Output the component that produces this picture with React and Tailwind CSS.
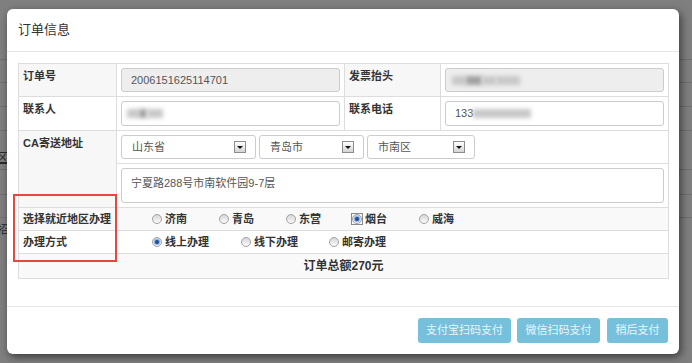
import React from 'react';

const FONT = { fontFamily: '"Liberation Sans", "Noto Sans CJK SC", Arial, sans-serif' };

// old-style radio button
const Radio = ({ checked, focus }) => (
  <span
    className={`inline-flex items-center justify-center w-[12px] h-[12px] ${focus ? 'border border-[#8a8a8a]' : ''}`}
  >
    <span className="w-[10px] h-[10px] rounded-full border border-[#a3a3a3] bg-gradient-to-b from-[#d6d6d6] to-[#fbfbfb] flex items-center justify-center">
      {checked && <span className="w-[4px] h-[4px] rounded-full bg-[#1d4f9c] shadow-[0_0_1px_1px_#7aa6dc]"></span>}
    </span>
  </span>
);

const RadioItem = ({ label, checked, focus, width }) => (
  <span className={`inline-flex items-center gap-[2px] ${width}`}>
    <Radio checked={checked} focus={focus} />
    <span className="font-bold text-[#333]">{label}</span>
  </span>
);

const Select = ({ value, width }) => (
  <div className={`${width} h-[24px] border border-[#ccc] rounded-[3px] bg-white flex items-center justify-between pl-[10px] pr-[9px]`}>
    <span className="text-[#555]">{value}</span>
    <span className="w-[12px] h-[12px] border border-[#8c8c8c] bg-gradient-to-b from-white to-[#d4d4d4] flex items-center justify-center">
      <span className="w-0 h-0 border-l-[3px] border-r-[3px] border-t-[3px] border-l-transparent border-r-transparent border-t-[#111]"></span>
    </span>
  </div>
);

// blurred (masked) personal data
const Blur = ({ w, dark }) => (
  <span className={`inline-block h-[9px] ${w} blur-[2px] ${dark ? 'bg-[#a0a0a0]' : 'bg-[#c8c8c8]'}`}></span>
);

const labelCell = 'p-[4px] align-top font-bold text-[#333] border border-[#ddd]';
const valueCell = 'p-[4px] align-top border border-[#ddd]';

export default function App() {
  return (
    <div className="relative w-[692px] h-[363px] overflow-hidden bg-[#7f7f7f] text-[11px]" style={FONT}>
      {/* page behind the overlay */}
      <div className="flex flex-col">
        <div className="h-[60px] border-b border-[#6f6f6f]"></div>
        <div className="h-[23px] border-b border-[#6f6f6f]"></div>
        <div className="h-[24px] border-b border-[#6f6f6f]"></div>
        <div className="h-[24px] border-b border-[#6f6f6f]"></div>
        <div className="h-[39px] border-b border-[#6f6f6f] pt-[18px]">
          <span className="-ml-[4px] text-[12px] text-[#2a2a2a] underline">区</span>
        </div>
        <div className="h-[25px] border-b border-[#6f6f6f]"></div>
        <div className="h-[23px] border-b border-[#6f6f6f]"></div>
        <div className="h-[30px] pt-[3px]">
          <span className="-ml-[3px] text-[12px] text-[#2a2a2a]">招</span>
        </div>
      </div>

      {/* modal */}
      <div className="absolute left-[7px] top-[9px] w-[672px] h-[345px] bg-white rounded-[6px] shadow-[2px_3px_8px_rgba(0,0,0,0.55)] flex flex-col">
        <div className="h-[43px] px-[11px] flex items-center border-b border-[#e5e5e5]">
          <span className="text-[13px] text-[#333]">订单信息</span>
        </div>

        <div className="pt-[11px] px-[11px] pb-[27px]">
          <table className="w-[650px] table-fixed border-collapse border border-[#ddd] text-[#333]">
            <colgroup>
              <col className="w-[98px]" />
              <col className="w-[228px]" />
              <col className="w-[96px]" />
              <col className="w-[228px]" />
            </colgroup>
            <tbody>
              <tr>
                <td className={`${labelCell} bg-[#f7f7f7]`}>订单号</td>
                <td className={valueCell}>
                  <div className="h-[24px] border border-[#ccc] rounded-[3px] bg-[#eee] flex items-center px-[9px] text-[#555]">
                    2006151625114701
                  </div>
                </td>
                <td className={`${labelCell} bg-[#f7f7f7]`}>发票抬头</td>
                <td className={valueCell}>
                  <div className="h-[24px] border border-[#ccc] rounded-[3px] bg-[#eee] flex items-center px-[6px]">
                    <Blur w="w-[14px]" />
                    <Blur w="w-[16px]" dark />
                    <Blur w="w-[14px]" />
                    <Blur w="w-[24px]" />
                  </div>
                </td>
              </tr>
              <tr>
                <td className={labelCell}>联系人</td>
                <td className={valueCell}>
                  <div className="h-[25px] border border-[#ccc] rounded-[3px] bg-white flex items-center px-[5px]">
                    <Blur w="w-[12px]" />
                    <Blur w="w-[8px]" dark />
                    <Blur w="w-[16px]" />
                  </div>
                </td>
                <td className={labelCell}>联系电话</td>
                <td className={valueCell}>
                  <div className="h-[25px] border border-[#ccc] rounded-[3px] bg-white flex items-center px-[9px] text-[#555]">
                    <span>133</span>
                    <Blur w="w-[58px]" />
                  </div>
                </td>
              </tr>
              <tr>
                <td rowSpan={2} className={`${labelCell} bg-[#f7f7f7]`}>CA寄送地址</td>
                <td colSpan={3} className={valueCell}>
                  <div className="flex gap-[3px]">
                    <Select value="山东省" width="w-[135px]" />
                    <Select value="青岛市" width="w-[105px]" />
                    <Select value="市南区" width="w-[108px]" />
                  </div>
                </td>
              </tr>
              <tr>
                <td colSpan={3} className={valueCell}>
                  <div className="h-[35px] border border-[#ccc] rounded-[3px] bg-white px-[9px] pt-[6px] text-[#555]">
                    宁夏路288号市南软件园9-7层
                  </div>
                </td>
              </tr>
              <tr className="bg-[#f9f9f9]">
                <td className="h-[23px] px-[4px] py-0 align-middle font-bold border border-[#ddd]">选择就近地区办理</td>
                <td colSpan={3} className="h-[23px] pl-[34px] py-0 align-middle border border-[#ddd]">
                  <div className="flex items-center">
                    <RadioItem label="济南" width="w-[67px]" />
                    <RadioItem label="青岛" width="w-[67px]" />
                    <RadioItem label="东营" width="w-[66px]" />
                    <RadioItem label="烟台" checked focus width="w-[67px]" />
                    <RadioItem label="威海" width="w-[67px]" />
                  </div>
                </td>
              </tr>
              <tr>
                <td className="h-[23px] px-[4px] py-0 align-middle font-bold border border-[#ddd]">办理方式</td>
                <td colSpan={3} className="h-[23px] pl-[34px] py-0 align-middle border border-[#ddd]">
                  <div className="flex items-center">
                    <RadioItem label="线上办理" checked width="w-[89px]" />
                    <RadioItem label="线下办理" width="w-[88px]" />
                    <RadioItem label="邮寄办理" width="w-[88px]" />
                  </div>
                </td>
              </tr>
              <tr className="bg-[#f9f9f9]">
                <td colSpan={4} className="h-[25px] py-0 text-center align-middle font-bold text-[12px] border border-[#ddd]">
                  订单总额270元
                </td>
              </tr>
            </tbody>
          </table>
        </div>

        <div className="flex-1 border-t border-[#e5e5e5] pt-[11px] px-[11px] flex justify-end items-start gap-[6px]">
          <button className="w-[93px] h-[25px] rounded-[3px] bg-[#76c0dc] text-[#eaf5fa] text-[11px]">支付宝扫码支付</button>
          <button className="w-[83px] h-[25px] rounded-[3px] bg-[#76c0dc] text-[#eaf5fa] text-[11px]">微信扫码支付</button>
          <button className="w-[61px] h-[25px] rounded-[3px] bg-[#76c0dc] text-[#eaf5fa] text-[11px] ml-[1px]">稍后支付</button>
        </div>
      </div>

      {/* red annotation box */}
      <div className="absolute left-[13px] top-[194px] w-[104px] h-[68px] border-2 border-[#e8473d]"></div>
    </div>
  );
}
